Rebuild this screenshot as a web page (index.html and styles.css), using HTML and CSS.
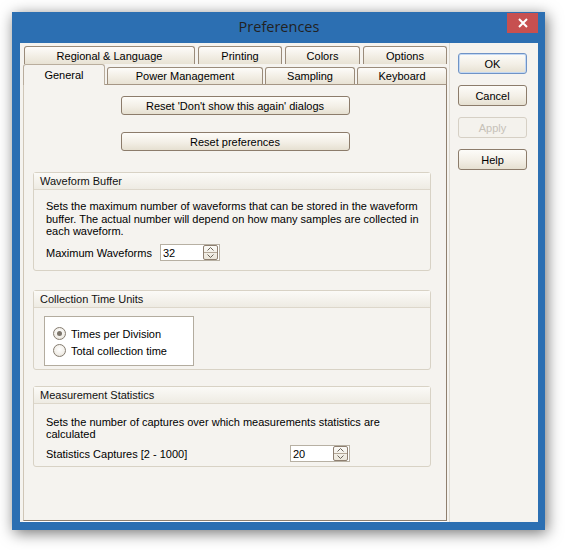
FILE: index.html
```html
<!DOCTYPE html>
<html>
<head>
<meta charset="utf-8">
<title>Preferences</title>
<link rel="stylesheet" href="styles.css">
</head>
<body>
<div class="screen">
  <div class="window">
    <div class="titlebar">
      <span class="spacer"></span>
      <span class="title">Preferences</span>
      <button class="close" aria-label="Close">
        <svg width="10" height="10" viewBox="0 0 10 10"><path d="M1 1 L9 9 M9 1 L1 9" stroke="#fff" stroke-width="2" fill="none"/></svg>
      </button>
    </div>
    <div class="client">
      <div class="left">
        <div class="tabs">
          <div class="row row1">
            <div class="tab w-regional">Regional &amp; Language</div>
            <div class="tab w-printing">Printing</div>
            <div class="tab w-colors">Colors</div>
            <div class="tab w-options">Options</div>
          </div>
          <div class="row row2">
            <div class="tab selected w-general">General</div>
            <div class="tab w-power">Power Management</div>
            <div class="tab w-sampling">Sampling</div>
            <div class="tab w-keyboard">Keyboard</div>
          </div>
        </div>
        <div class="page">
          <div class="page-buttons">
            <button class="btn wide">Reset 'Don't show this again' dialogs</button>
            <button class="btn wide">Reset preferences</button>
          </div>

          <div class="group g1">
            <div class="group-head">Waveform Buffer</div>
            <div class="group-body">
              <p class="desc">Sets the maximum number of waveforms that can be stored in the waveform<br>buffer. The actual number will depend on how many samples are collected in<br>each waveform.</p>
              <div class="field">
                <span class="label l-max">Maximum Waveforms</span>
                <div class="spin"><span class="val">32</span><span class="spin-btn"><span class="up"><svg width="7" height="4" viewBox="0 0 7 4"><path d="M0.5 3.5 L3.5 0.5 L6.5 3.5" stroke="#6b6358" fill="none"/></svg></span><span class="down"><svg width="7" height="4" viewBox="0 0 7 4"><path d="M0.5 0.5 L3.5 3.5 L6.5 0.5" stroke="#6b6358" fill="none"/></svg></span></span></div>
              </div>
            </div>
          </div>

          <div class="group g2">
            <div class="group-head">Collection Time Units</div>
            <div class="group-body">
              <div class="radio-box">
                <div class="radio-row"><span class="radio checked"></span>Times per Division</div>
                <div class="radio-row"><span class="radio"></span>Total collection time</div>
              </div>
            </div>
          </div>

          <div class="group g3">
            <div class="group-head">Measurement Statistics</div>
            <div class="group-body">
              <p class="desc">Sets the number of captures over which measurements statistics are<br>calculated</p>
              <div class="field">
                <span class="label l-stat">Statistics Captures [2 - 1000]</span>
                <div class="spin"><span class="val">20</span><span class="spin-btn"><span class="up"><svg width="7" height="4" viewBox="0 0 7 4"><path d="M0.5 3.5 L3.5 0.5 L6.5 3.5" stroke="#6b6358" fill="none"/></svg></span><span class="down"><svg width="7" height="4" viewBox="0 0 7 4"><path d="M0.5 0.5 L3.5 3.5 L6.5 0.5" stroke="#6b6358" fill="none"/></svg></span></span></div>
              </div>
            </div>
          </div>
        </div>
      </div>
      <div class="actions">
        <button class="btn act default">OK</button>
        <button class="btn act">Cancel</button>
        <button class="btn act disabled">Apply</button>
        <button class="btn act">Help</button>
      </div>
    </div>
  </div>
</div>
</body>
</html>
```

FILE: styles.css
```css
* { box-sizing: border-box; }
html, body { margin: 0; padding: 0; background: #ffffff; }
body { font-family: "Liberation Sans", Arial, sans-serif; font-size: 11px; color: #000; }

.screen { width: 565px; height: 550px; padding: 12px 0 0 12px; overflow: hidden; }

.window {
  width: 533px;
  height: 518px;
  background: #2c6fb2;
  padding: 0 7px 8px 8px;
  display: flex;
  flex-direction: column;
  box-shadow: 2px 3px 14px rgba(0,0,0,0.55);
}

.titlebar {
  height: 31px;
  display: grid;
  grid-template-columns: 1fr auto 1fr;
  align-items: start;
}
.title {
  font-family: "Open Sans", "Noto Sans", sans-serif;
  font-size: 14.5px;
  color: #222;
  line-height: 30px;
}
.close {
  justify-self: end;
  margin-top: 1px;
  width: 31px;
  height: 20px;
  border: 0;
  padding: 0;
  background: #c75050;
  display: flex;
  align-items: center;
  justify-content: center;
}

.client {
  flex: 1;
  background: #f5f3ef;
  display: flex;
}

.left {
  width: 430px;
  border-right: 1px solid #dedad1;
  padding: 3px 0 0 3px;
}

.tabs { display: flex; flex-direction: column; }
.row { display: flex; }
.row1 { height: 18px; gap: 3px; padding-left: 1px; }
.row2 { height: 20px; gap: 2px; align-items: flex-end; }

.tab {
  border: 1px solid #9a8b7a;
  border-bottom: 0;
  border-radius: 3px 3px 0 0;
  background: linear-gradient(#fdfcfa 0%, #f3efe6 50%, #e8e2d4 100%);
  display: flex;
  align-items: center;
  justify-content: center;
  white-space: nowrap;
}
.row1 .tab { height: 18px; padding-top: 1px; }
.row2 .tab { height: 17px; }
.tab.selected {
  height: 21px;
  margin-bottom: -1px;
  position: relative;
  z-index: 1;
  background: #f5f3ef;
  border-color: #b9ad9d;
  padding-bottom: 1px;
}
.w-regional { width: 171px; }
.w-printing { width: 84px; }
.w-colors { width: 75px; }
.w-options { width: 84px; }
.w-general { width: 82px; }
.w-power { width: 156px; }
.w-sampling { width: 90px; }
.w-keyboard { width: 90px; }

.page {
  width: 424px;
  height: 437px;
  border: 1px solid #8f7f6e;
  border-left-color: #cfc6b7;
  border-top-color: #a59685;
  box-shadow: 0 1px 0 #ffffff;
  padding-top: 11px;
}

.page-buttons {
  display: flex;
  flex-direction: column;
  align-items: center;
  gap: 17px;
}

.btn {
  font-family: "Liberation Sans", Arial, sans-serif;
  font-size: 11px;
  color: #000;
  border: 1px solid #8c7c6b;
  border-radius: 3px;
  background: linear-gradient(#fdfcf9 0%, #f3efe6 55%, #e6e0d1 100%);
  padding: 0;
  display: flex;
  align-items: center;
  justify-content: center;
}
.btn.wide { width: 229px; height: 19px; }

.actions {
  display: flex;
  flex-direction: column;
  gap: 11px;
  padding: 10px 0 0 8px;
}
.btn.act { width: 69px; height: 21px; }
.btn.default {
  border-color: #6f93c6;
  box-shadow: inset 0 0 0 1px #c3d8f3;
}
.btn.disabled {
  border-color: #d6d0c5;
  background: #f4f2ed;
  color: #c6c1b8;
}

.group {
  margin-left: 9px;
  width: 398px;
  border: 1px solid #d8d2c5;
  border-radius: 3px;
}
.g1 { margin-top: 21px; height: 99px; }
.g2 { margin-top: 19px; height: 80px; }
.g3 { margin-top: 16px; height: 81px; }

.group-head {
  height: 17px;
  border-bottom: 1px solid #ddd7cb;
  background: linear-gradient(#fbfaf7, #eeebe3);
  padding-left: 6px;
  line-height: 16px;
  color: #111;
}

.group-body { padding-left: 12px; }

.desc { margin: 0; line-height: 12.7px; }
.g1 .desc { padding-top: 10px; }
.g3 .desc { padding-top: 12px; line-height: 12px; }

.field { display: flex; align-items: center; }
.g1 .field { margin-top: 6px; }
.g3 .field { margin-top: 5px; }
.label.l-max { width: 114px; }
.label.l-stat { width: 244px; }

.spin {
  width: 60px;
  height: 17px;
  background: #fff;
  border: 1px solid #b7b0a3;
  display: flex;
  align-items: center;
  justify-content: space-between;
  padding: 0 1px 0 2px;
}
.val { color: #000; }
.spin-btn {
  width: 15px;
  height: 15px;
  border: 1px solid #8e7f70;
  border-radius: 2px;
  display: flex;
  flex-direction: column;
  background: linear-gradient(#fbfaf7, #ebe6da);
}
.spin-btn .up, .spin-btn .down {
  flex: 1;
  display: flex;
  align-items: center;
  justify-content: center;
}
.spin-btn .up { border-bottom: 1px solid #b3a797; }

.g2 .group-body { padding: 8px 0 0 10px; }
.radio-box {
  width: 150px;
  height: 50px;
  background: #fff;
  border: 1px solid #b3ac9f;
  padding-top: 8px;
  padding-left: 8px;
}
.radio-row {
  height: 17px;
  display: flex;
  align-items: center;
  gap: 5px;
}
.radio {
  width: 13px;
  height: 13px;
  border-radius: 50%;
  border: 1px solid #857c70;
  background: radial-gradient(circle at 50% 40%, #ffffff 0%, #f1eee8 60%, #dcd6cb 100%);
  display: flex;
  align-items: center;
  justify-content: center;
}
.radio.checked::after {
  content: "";
  width: 5px;
  height: 5px;
  border-radius: 50%;
  background: #7c756b;
}
```
